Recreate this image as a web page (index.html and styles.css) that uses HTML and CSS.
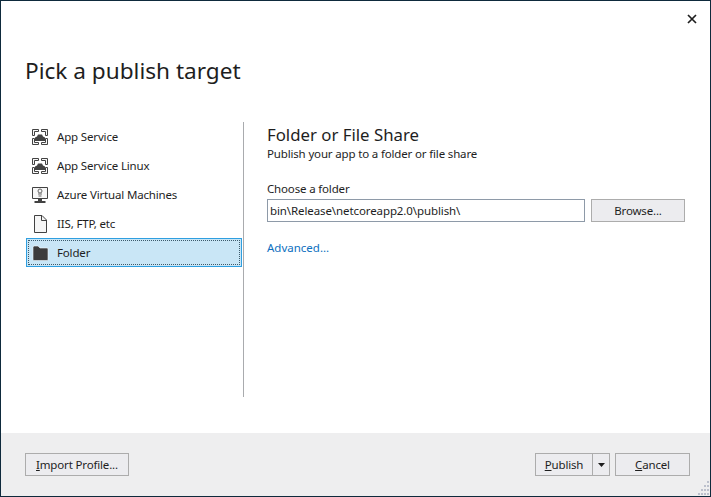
FILE: index.html
```html
<!DOCTYPE html>
<html lang="en">
<head>
    <meta charset="UTF-8">
    <title>Pick a publish target</title>
    <link rel="stylesheet" href="styles.css">
</head>
<body>
    <div class="window">
        <div class="titlebar">
            <svg class="close" width="10" height="10" viewBox="0 0 10 10"><path d="M1 1L9 9M9 1L1 9" stroke="#1e1e1e" stroke-width="1.7" fill="none"/></svg>
        </div>
        <h1 class="title">Pick a publish target</h1>

        <div class="content">
            <!-- Target list -->
            <ul class="targets">
                <li class="target">
                    <svg class="icon" width="18" height="18" viewBox="0 0 18 18"><path d="M1.500 7.500V1.500H7.500V3.500H3.500V7.500ZM10.500 1.500H16.500V7.500H14.500V3.500H10.500ZM1.500 10.500H3.500V14.500H7.500V16.500H1.500ZM14.500 10.500H16.500V16.500H10.500V14.500H14.500Z" fill="#f6f6f6" stroke="#424242"/><path d="M4 13V9.500L6 8.500L7 6.500H11L12 8.500L14 9.500V13Z" fill="#424242"/></svg>
                    <span>App Service</span>
                </li>
                <li class="target">
                    <svg class="icon" width="18" height="18" viewBox="0 0 18 18"><path d="M1.500 7.500V1.500H7.500V3.500H3.500V7.500ZM10.500 1.500H16.500V7.500H14.500V3.500H10.500ZM1.500 10.500H3.500V14.500H7.500V16.500H1.500ZM14.500 10.500H16.500V16.500H10.500V14.500H14.500Z" fill="#f6f6f6" stroke="#424242"/><path d="M4 13V9.500L6 8.500L7 6.500H11L12 8.500L14 9.500V13Z" fill="#424242"/></svg>
                    <span>App Service Linux</span>
                </li>
                <li class="target">
                    <svg class="icon" width="18" height="18" viewBox="0 0 18 18"><path d="M1.500 1.500H16.500V12.500H1.500Z" fill="#f6f6f6" stroke="#424242"/><path d="M7 13H11V15H14.500V17H3.500V15H7Z" fill="#424242"/><circle cx="9" cy="5" r="2" fill="none" stroke="#666"/><path d="M7 8H11M7.500 10H10.500" stroke="#666"/></svg>
                    <span>Azure Virtual Machines</span>
                </li>
                <li class="target">
                    <svg class="icon" width="18" height="18" viewBox="0 0 18 18"><path d="M3.500 .5H11L15.500 5V17.500H3.500Z" fill="#f6f6f6" stroke="#424242"/><path d="M10.500 .5V5.500H15.500" fill="none" stroke="#424242"/></svg>
                    <span>IIS, FTP, etc</span>
                </li>
                <li class="target selected">
                    <div class="focus">
                        <svg class="icon" width="18" height="18" viewBox="0 0 18 18"><path d="M2 3.500Q2 2 3.500 2H7L9 4H16Q17 4 17 5V15.500Q17 16.500 16 16.500H3Q2 16.500 2 15.500Z" fill="#3c3c3c" stroke="#f2f8fb" stroke-width=".6"/></svg>
                        <span>Folder</span>
                    </div>
                </li>
            </ul>

            <div class="divider"></div>

            <!-- Folder options -->
            <div class="details">
                <h2 class="details-title">Folder or File Share</h2>
                <p class="details-sub">Publish your app to a folder or file share</p>
                <label class="field-label" for="folder">Choose a folder</label>
                <div class="field-row">
                    <input class="path" id="folder" type="text" value="bin\Release\netcoreapp2.0\publish\">
                    <button class="btn browse">Browse...</button>
                </div>
                <a class="advanced" href="#">Advanced...</a>
            </div>
        </div>

        <div class="footer">
            <button class="btn import"><u>I</u>mport Profile...</button>
            <div class="footer-right">
                <div class="split">
                    <button class="split-main"><u>P</u>ublish</button>
                    <button class="split-arrow"><svg width="7" height="4" viewBox="0 0 7 4"><path d="M0 0H7L3.500 4Z" fill="#1e1e1e"/></svg></button>
                </div>
                <button class="btn cancel"><u>C</u>ancel</button>
            </div>
            <svg class="grip" width="12" height="16" viewBox="0 0 12 16"><path d="M9 1h2v2H9zM6 5h2v2H6zM9 5h2v2H9zM3 9h2v2H3zM6 9h2v2H6zM9 9h2v2H9zM0 13h2v2H0zM3 13h2v2H3zM6 13h2v2H6zM9 13h2v2H9z" fill="#bcc0cc"/></svg>
        </div>
    </div>
</body>
</html>
```

FILE: styles.css
```css
/* General */
html, body {
    margin: 0;
    padding: 0;
    height: 100%;
    overflow: hidden;
}

body {
    font-family: "Noto Sans", Arial, sans-serif;
    font-size: 11.5px;
    letter-spacing: -0.16px;
    color: #1e1e1e;
}

.window {
    box-sizing: border-box;
    width: 711px;
    height: 497px;
    border: 1px solid #0e2a3c;
    background-color: #fff;
    display: flex;
    flex-direction: column;
    position: relative;
}

.titlebar {
    height: 35px;
    display: flex;
    justify-content: flex-end;
    align-items: center;
    padding-right: 13px;
    flex-shrink: 0;
}

.title {
    margin: 0 0 0 24px;
    height: 86px;
    padding-top: 20px;
    box-sizing: border-box;
    font-size: 22.6px;
    font-weight: normal;
    line-height: 30px;
    letter-spacing: 0;
    color: #1e1e1e;
}

/* Main area */
.content {
    flex: 1;
    display: flex;
    align-items: flex-start;
    padding-left: 25px;
}

.targets {
    list-style: none;
    margin: 0;
    padding: 0;
    width: 216px;
}

.target {
    height: 29px;
    display: flex;
    align-items: center;
    padding-left: 5px;
    gap: 8px;
    box-sizing: border-box;
}

.target .icon {
    flex-shrink: 0;
}

.target.selected {
    height: 29px;
    padding: 0;
    border: 1px solid #2f9fe0;
    background-color: #c9e6f6;
}

.focus {
    flex: 1;
    height: 25px;
    margin: 1px;
    box-sizing: border-box;
    border: 1px dotted #3c5a6b;
    display: flex;
    align-items: center;
    gap: 8px;
    padding-left: 2px;
}

.divider {
    width: 1px;
    height: 275px;
    margin-left: 1px;
    background-color: #a9abae;
}

.details {
    padding-left: 23px;
    width: 418px;
}

.details-title {
    margin: 1px 0 0 0;
    font-size: 16.8px;
    font-weight: normal;
    line-height: 24px;
    letter-spacing: 0;
}

.details-sub {
    margin: 0 0 20px 0;
    line-height: 14px;
}

.field-label {
    display: block;
    line-height: 16px;
    margin-bottom: 2px;
}

.field-row {
    display: flex;
    gap: 6px;
}

.path {
    box-sizing: border-box;
    width: 318px;
    height: 23px;
    border: 1px solid #8e9aa8;
    padding: 0 2px;
    font-family: inherit;
    font-size: 11.5px;
    letter-spacing: -0.1px;
    color: #1e1e1e;
    outline: none;
}

.advanced {
    display: inline-block;
    margin-top: 18px;
    letter-spacing: 0;
    color: #0e70c0;
    text-decoration: none;
}

/* Buttons */
.btn, .split-main, .split-arrow {
    box-sizing: border-box;
    height: 23px;
    border: 1px solid #acacac;
    background-color: #ececef;
    font-family: inherit;
    font-size: 11.5px;
    letter-spacing: -0.16px;
    color: #1e1e1e;
    padding: 0;
}

.browse {
    width: 94px;
}

.import {
    width: 104px;
}

.cancel {
    width: 75px;
}

/* Footer */
.footer {
    height: 63px;
    flex-shrink: 0;
    box-sizing: border-box;
    background-color: #eeeeef;
    padding: 20px 20px 0 24px;
    display: flex;
    justify-content: space-between;
    align-items: flex-start;
}

.footer-right {
    display: flex;
    gap: 5px;
}

.split {
    display: flex;
}

.split-main {
    width: 58px;
}

.split-arrow {
    width: 17px;
    border-left: none;
    display: flex;
    align-items: center;
    justify-content: center;
}

.grip {
    position: absolute;
    right: 0;
    bottom: 0;
}
```
